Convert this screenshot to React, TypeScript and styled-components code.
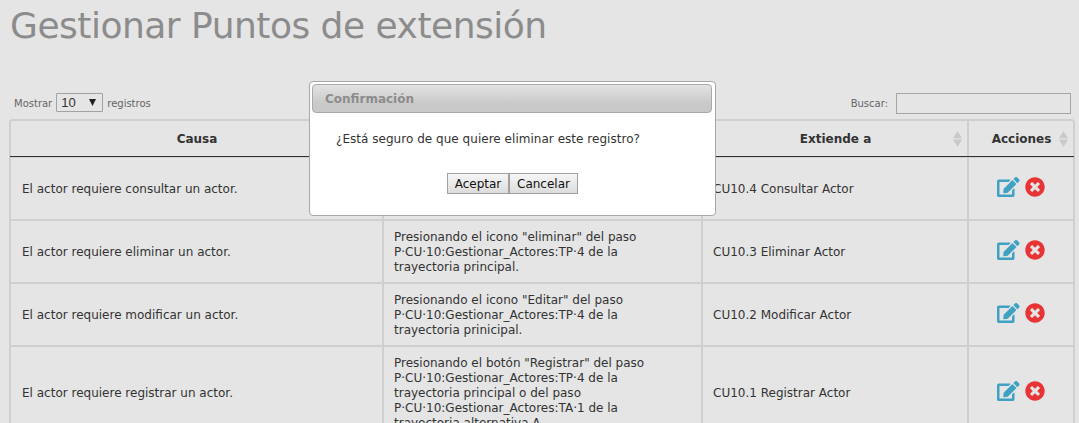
import React from "react";
import styled, { createGlobalStyle } from "styled-components";
import { FaEdit, FaTimesCircle } from "react-icons/fa";

const GlobalStyle = createGlobalStyle`
  * { box-sizing: border-box; }
  body {
    margin: 0;
    background: #e5e5e5;
    color: #333;
    font: 12px/15px "DejaVu Sans", sans-serif;
    overflow: hidden;
  }
`;

const Page = styled.main`
  position: relative;
  width: 1079px;
  height: 423px;
  overflow: hidden;
  padding: 0 4px 0 9px;
`;

const Title = styled.h1`
  margin: 0;
  height: 93px;
  padding: 4px 0 0 1px;
  font: 400 36px/44px "DejaVu Sans", sans-serif;
  letter-spacing: -0.5px;
  color: #8c8c8c;
  white-space: nowrap;
`;

const Toolbar = styled.div`
  display: flex;
  justify-content: space-between;
  align-items: flex-start;
  height: 26px;
  padding: 0 4px 0 5px;
  font: 10px/20px "DejaVu Sans", sans-serif;
  color: #666;
`;

const Label = styled.label`
  display: flex;
`;

const Caption = styled.span<{ $gap?: number }>`
  padding-top: 1px;
  margin-right: ${(p) => p.$gap ?? 0}px;
`;

const Select = styled.span`
  display: flex;
  justify-content: space-between;
  align-items: center;
  width: 47px;
  height: 19px;
  margin-right: 4px;
  padding: 0 6px 0 4px;
  border: 1px solid #a2a2a2;
  border-radius: 1px;
  font: 13px/17px "Liberation Sans", sans-serif;
  color: #333;
`;

const Arrow = styled.svg`
  margin-bottom: 1px;
  fill: #222;
`;

const Search = styled.input`
  width: 175px;
  height: 21px;
  border: 1px solid #a5a5a5;
  background: transparent;
`;

const Table = styled.section`
  width: 1066px;
  border: 2px solid #cfcfcf;
  border-radius: 4px;
`;

const Row = styled.div`
  display: grid;
  grid-template-columns: 373px 319px 266px 104px;
  border-bottom: 2px solid #cfcfcf;
`;

const HeadRow = styled(Row)`
  height: 36px;
  margin: 0 -1px;
  padding: 0 1px;
  border-bottom: 1px solid #333;
  font-weight: 700;
  & + ${Row} { border-top: 1px solid #cfcfcf; }
`;

const Cell = styled.div`
  display: flex;
  align-items: center;
  padding: 9px 10px 7px;
  border-right: 2px solid #cfcfcf;
  white-space: pre-line;
  &:first-child { padding-left: 11px; }
  &:last-child { border-right: 0; }
`;

const HeadCell = styled(Cell)`
  position: relative;
  justify-content: center;
  && { padding: 2px 0 0 1px; }
`;

const SortIcon = styled.svg`
  position: absolute;
  right: 5px;
  top: 10px;
  fill: #c9c9c9;
`;

const Actions = styled(Cell)`
  justify-content: center;
  gap: 5.5px;
  padding: 0 0 3px;
`;

const EditIcon = styled(FaEdit)`
  width: 22.5px;
  height: 20px;
  color: #3fa2c3;
`;

const DeleteIcon = styled(FaTimesCircle)`
  width: 20px;
  height: 20px;
  color: #e83434;
`;

const Dialog = styled.div`
  position: absolute;
  left: 309px;
  top: 81px;
  width: 407px;
  height: 135px;
  padding: 2px 3px 2px 2px;
  border: 1px solid #a8a8a8;
  border-radius: 4px;
  background: #fff;
`;

const DialogTitle = styled.div`
  height: 29px;
  padding-left: 12px;
  border: 1px solid #aaa;
  border-radius: 4px;
  background: linear-gradient(#e2e2e2, #c9c9c9 70%);
  font-weight: 700;
  line-height: 28px;
  color: #8c8c8c;
`;

const Message = styled.p`
  margin: 19px 0 0 24px;
  letter-spacing: 0.03px;
  color: #333;
`;

const Buttons = styled.div`
  display: flex;
  margin: 26px 0 0 135px;
`;

const Button = styled.button<{ $width: number }>`
  width: ${(p) => p.$width}px;
  height: 21px;
  padding: 2px 0 0;
  border: 1px solid #a0a0a0;
  background: linear-gradient(#f6f6f6, #dcdcdc);
  font: 12px/17px "DejaVu Sans", sans-serif;
  color: #111;
`;

const Sort = () => (
  <SortIcon width="9" height="16" viewBox="0 0 9 16">
    <path d="M4.5 0 9 7.3H0ZM0 8.5h9L4.5 16Z" />
  </SortIcon>
);

const rows = [
  ["El actor requiere consultar un actor.", 'Presionando el icono "Consultar" del paso\nP·CU·10:Gestionar_Actores:TP·4 de la\ntrayectoria principal.', "CU10.4 Consultar Actor"],
  ["El actor requiere eliminar un actor.", 'Presionando el icono "eliminar" del paso\nP·CU·10:Gestionar_Actores:TP·4 de la\ntrayectoria principal.', "CU10.3 Eliminar Actor"],
  ["El actor requiere modificar un actor.", 'Presionando el icono "Editar" del paso\nP·CU·10:Gestionar_Actores:TP·4 de la\ntrayectoria prinicipal.', "CU10.2 Modificar Actor"],
  ["El actor requiere registrar un actor.", 'Presionando el botón "Registrar" del paso\nP·CU·10:Gestionar_Actores:TP·4 de la\ntrayectoria principal o del paso\nP·CU·10:Gestionar_Actores:TA·1 de la\ntrayectoria alternativa A.', "CU10.1 Registrar Actor"],
];

export default function App() {
  return (
    <Page>
      <GlobalStyle />
      <Title>Gestionar Puntos de extensión</Title>
      <Toolbar>
        <Label>
          <Caption $gap={4}>Mostrar</Caption>
          <Select>
            10
            <Arrow width="7" height="7" viewBox="0 0 7 7"><path d="M0 0h7L3.5 7Z" /></Arrow>
          </Select>
          <Caption>registros</Caption>
        </Label>
        <Label>
          <Caption $gap={8}>Buscar:</Caption>
          <Search />
        </Label>
      </Toolbar>
      <Table>
        <HeadRow>
          <HeadCell>Causa</HeadCell>
          <HeadCell />
          <HeadCell>Extiende a<Sort /></HeadCell>
          <HeadCell>Acciones<Sort /></HeadCell>
        </HeadRow>
        {rows.map(([cause, region, target]) => (
          <Row key={target}>
            <Cell>{cause}</Cell>
            <Cell>{region}</Cell>
            <Cell>{target}</Cell>
            <Actions>
              <EditIcon />
              <DeleteIcon />
            </Actions>
          </Row>
        ))}
      </Table>
      <Dialog role="dialog">
        <DialogTitle>Confirmación</DialogTitle>
        <Message>¿Está seguro de que quiere eliminar este registro?</Message>
        <Buttons>
          <Button $width={62}>Aceptar</Button>
          <Button $width={69}>Cancelar</Button>
        </Buttons>
      </Dialog>
    </Page>
  );
}
